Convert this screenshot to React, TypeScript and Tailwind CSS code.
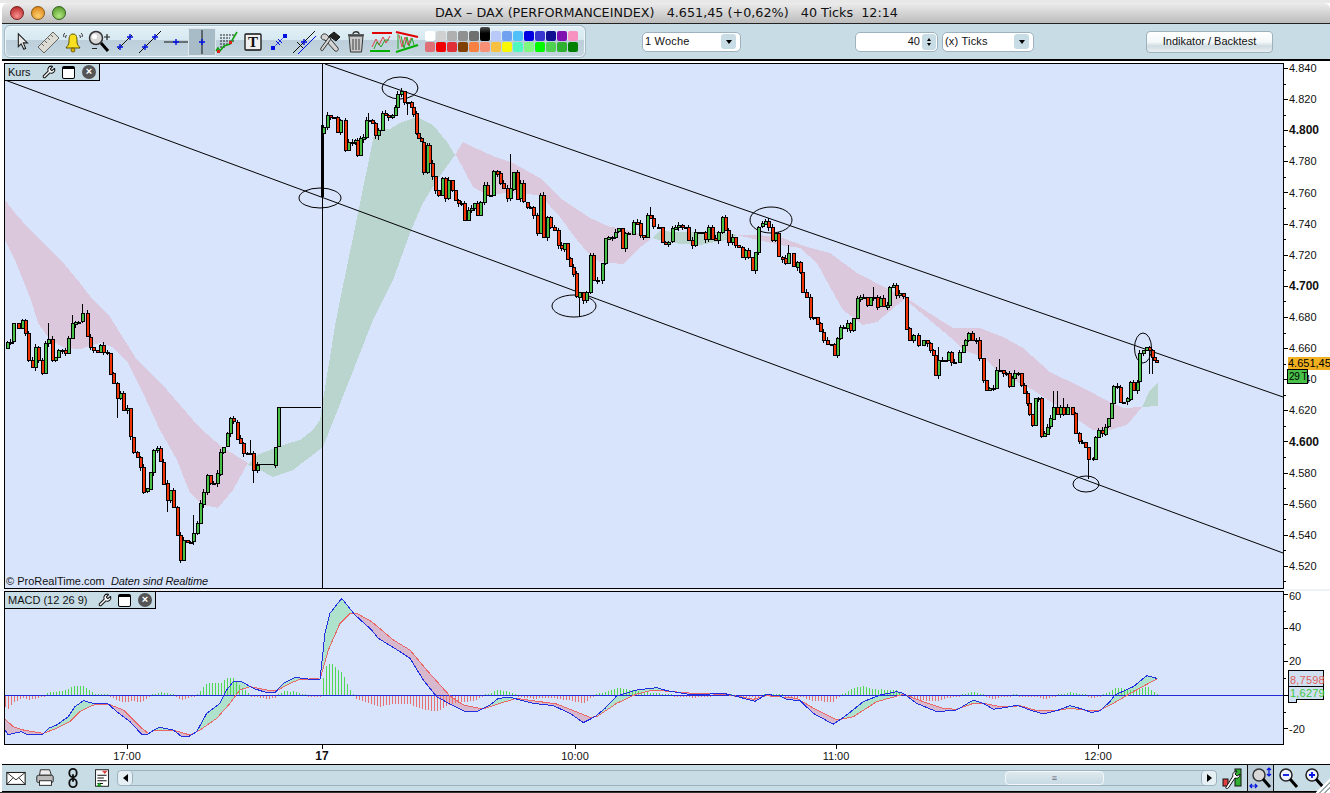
import React from 'react';
import { Wrench } from 'lucide-react';

type Pt = [number, number];

// chart points were read off crops of the screenshot, so they carry the crop origin
const crop = (ox: number, oy: number, flat: number[]): Pt[] => {
  const out: Pt[] = [];
  for (let i = 0; i < flat.length; i += 2) out.push([ox + flat[i] / 3, oy + flat[i + 1] / 3]);
  return out;
};

const interp = (pts: Pt[], x: number) => {
  if (x <= pts[0][0]) return pts[0][1];
  for (let i = 1; i < pts.length; i++) {
    if (x <= pts[i][0]) {
      const [x0, y0] = pts[i - 1];
      const [x1, y1] = pts[i];
      return y0 + ((y1 - y0) * (x - x0)) / (x1 - x0 || 1);
    }
  }
  return pts[pts.length - 1][1];
};

const closes: Pt[] = [
  ...crop(0, 300, [20,125,30,125,40,70,55,85,65,60,75,100,85,180,95,200,105,140,115,180,125,220,135,130,145,118,155,180,165,170,175,150,185,150,195,160,205,115,215,70,225,65,235,65,245,40,260,110,270,140,280,150,290,155,300,135,310,155,320,158,330,220,340,250,350,295,360,280,370,330,380,325,390,410,400,455,410,470,420,500,430,575,440,565,450,515,460,450,470,445,480,485,490,550,500,600,510,570,520,620,530,705,540,780,550,720,560,725,570,725,580,700,590,670,600,610,610,575,620,525,630,550,640,550,650,520,660,455,670,440,680,400,690,355,700,365,710,415,720,430,730,460,740,460,750,460,760,510,770,495,825,440,835,322]),
];

const closesRight: Pt[] = [
  ...crop(300, 70, [70,170,80,135,90,140,100,140,110,185,120,150,135,240,145,215,155,215,165,210,170,255,180,205,190,200,197,150,205,150,215,160,225,195,235,180,245,130,255,135,265,140,275,135,285,112,292,72,302,62,312,95,322,95,332,110,340,130,347,190,355,205,362,215,370,305,380,225,388,278,397,318,405,360,415,375,425,325,435,385,445,330,455,360,465,390,473,400,483,400,493,450,503,420,513,415,523,400,530,435,540,395,552,345,560,375,570,375,580,302,590,310,600,340,610,355,620,385,630,355,640,305,650,385,660,340,670,395,680,410,690,410,700,435,710,490,720,375,730,500,740,440,750,470,763,480,773,525,783,535,793,518,800,565,810,590,818,610,828,680,838,665,848,690,858,665]),
  ...crop(590, 190, [0,195,10,270,20,270,35,220,45,145,55,140,65,140,75,125,85,115,95,175,105,130,115,130,130,95,140,100,150,135,160,140,170,75,180,85,190,110,205,110,215,155,225,160,235,155,245,115,255,110,265,105,275,110,285,110,295,150,305,165,315,125,325,125,335,125,345,145,355,110,365,145,375,150,385,125,395,80,405,120,415,155,425,140,435,165,445,170,455,200,465,180,475,200,485,240,495,185,505,110,515,100,525,92,535,110,545,150,555,130,565,200,575,205,585,220,595,190,610,230,620,215,630,245,637,305,647,320,660,380,670,380,680,400,690,425,700,450,710,462,722,462,732,495,742,445,750,412,760,415,770,400,780,420,790,385,800,325,810,320,820,320,830,345,840,320,850,320,860,350,870,325,880,350,890,345,898,290,908,285,918,315,928,310,938,320,948,415,958,450,968,435,985,465]),
  ...crop(920, 270, [10,210,20,220,30,240,38,255,46,315,55,270,65,270,75,270,85,245,93,275,103,275,118,245,128,225,135,210,145,188,155,210,168,210,178,265,188,330,198,360,208,355,218,355,228,300,238,300,248,310,258,310,268,350,275,325,283,310,293,310,303,345,311,370,320,400,328,432,336,465,345,385,355,385,363,500,373,490,381,470,390,445,400,410,410,430,420,410,430,430,440,410,457,430,466,490,476,515,486,515,494,530,504,565,518,565,526,500,535,480,545,490,555,470,563,445,573,400,580,348,590,350,600,395,610,395,620,385,630,335,640,360,650,335,658,250]),
  ...crop(1050, 320, [278,90,288,80,296,90,305,110,312,120,318,125]),
];

const longWicks: Pt[] = [
  [511,154],[579,317],[1089,479],[1150,374],[48,323],[999,359],[1055,391],[1063,398],[938,347],[650,207],[872,287],[790,245],[83,304],[72,315],[118,418],[250,440],[252,483],[192,515],[167,512],[368,113],[407,115],[378,140],
];

const hash = (i: number) => ((i * 2654435761) >>> 0) % 97;

type Candle = { x: number; open: number; close: number; hi: number; lo: number };

const makeCandles = (pts: Pt[]): Candle[] =>
  pts.map(([x, close], i) => {
    const open = i === 0 ? close + 6 : pts[i - 1][1];
    const h = hash(i + 3);
    const top = Math.min(open, close);
    const bot = Math.max(open, close);
    let hi = top - (h % 4);
    let lo = bot + ((h >> 2) % 5);
    for (const [wx, wy] of longWicks) {
      if (Math.abs(wx - x) < 1.7) {
        if (wy < hi) hi = wy;
        if (wy > lo) lo = wy;
      }
    }
    return { x: Math.round(x), open, close, hi, lo };
  });

const candles = [...makeCandles(closes), ...makeCandles(closesRight)];

const clouds: { color: string; pts: Pt[] }[] = [
  { color: '#dcc8dc', pts: [[5,200],[15,213],[30,230],[50,250],[65,265],[80,283],[93,300],[110,317],[137,360],[167,390],[200,428],[222,447],[248,463],[233,490],[218,508],[203,505],[190,493],[177,460],[160,430],[143,393],[128,363],[113,347],[100,343],[80,349],[65,348],[50,340],[38,323],[31,300],[25,285],[15,260],[5,240]] },
  { color: '#b9d5cd', pts: [[248,465],[257,455],[283,445],[300,440],[313,430],[320,420],[323,400],[336,320],[358,213],[373,140],[375,129],[390,129],[400,123],[417,117],[433,125],[447,142],[455,155],[437,180],[422,205],[410,233],[393,280],[373,320],[323,447],[293,470],[273,477],[260,470]] },
  { color: '#dcc8dc', pts: [[455,155],[463,142],[473,147],[493,156],[513,163],[540,178],[563,200],[590,218],[610,227],[620,228],[637,233],[652,238],[637,250],[623,264],[600,262],[590,255],[577,240],[560,217],[540,195],[507,193],[487,195],[473,187],[457,157]] },
  { color: '#b9d5cd', pts: [[652,238],[660,231],[677,232],[690,232],[723,232],[737,235],[727,240],[700,245],[670,243]] },
  { color: '#dcc8dc', pts: [[737,235],[757,235],[780,237],[807,247],[830,253],[857,273],[890,290],[905,297],[920,307],[940,320],[953,328],[980,328],[1003,337],[1023,348],[1050,372],[1083,388],[1110,402],[1123,408],[1142,407],[1127,425],[1110,430],[1093,430],[1063,410],[1033,390],[1000,373],[983,357],[963,350],[950,337],[920,312],[905,299],[897,305],[877,322],[863,325],[843,310],[830,287],[817,263],[800,248],[780,245]] },
  { color: '#b9d5cd', pts: [[1142,407],[1150,390],[1158,383],[1158,406]] },
];

const rings = [
  { cx: 400, cy: 88, rx: 18, ry: 11 },
  { cx: 320, cy: 198, rx: 21, ry: 10 },
  { cx: 574, cy: 306, rx: 22, ry: 11 },
  { cx: 771, cy: 220, rx: 21, ry: 13 },
  { cx: 1143, cy: 348, rx: 8.5, ry: 15 },
  { cx: 1086, cy: 484, rx: 13, ry: 8 },
];

const path = (pts: Pt[]) => pts.map(([x, y]) => `${x},${y}`).join(' ');

function PriceDrawing() {
  return (
    <svg className="block w-full h-full" viewBox="5 64 1278 524" shapeRendering="crispEdges">
      {clouds.map((c, i) => (
        <polygon key={i} points={path(c.pts)} fill={c.color} />
      ))}
      <line x1="5" y1="80" x2="1283" y2="553" stroke="#000" strokeWidth="1" shapeRendering="auto" />
      <line x1="325" y1="64" x2="1283" y2="397" stroke="#000" strokeWidth="1" shapeRendering="auto" />
      {rings.map((r, i) => (
        <ellipse key={i} {...r} fill="none" stroke="#000" strokeWidth="1" shapeRendering="auto" />
      ))}
      <rect x="322" y="64" width="1" height="524" fill="#000" />
      <rect x="321" y="125" width="3" height="72" fill="#000" />
      <rect x="254" y="464" width="22" height="1" fill="#000" />
      <rect x="278" y="407" width="43" height="1" fill="#000" />
      {/* blacks first so a neighbour's edge doesn't eat the body colour */}
      {candles.map((c, i) => {
        const top = Math.round(Math.min(c.open, c.close));
        const h = Math.max(1, Math.round(Math.abs(c.open - c.close)));
        return (
          <g key={i}>
            <rect x={c.x} y={Math.round(c.hi)} width="1" height={Math.round(c.lo - c.hi)} fill="#000" />
            <rect x={c.x - 1} y={top} width="4" height={h + 1} fill="#000" />
          </g>
        );
      })}
      {candles.map((c, i) => {
        const top = Math.round(Math.min(c.open, c.close));
        const h = Math.round(Math.abs(c.open - c.close));
        if (h < 2) return null;
        return <rect key={i} x={c.x} y={top + 1} width="2" height={h - 1} fill={c.close < c.open ? '#48c048' : '#f03408'} />;
      })}
    </svg>
  );
}

const blue: Pt[] = [
  ...crop(0, 570, [15,480,25,495,40,490,65,485,85,495,130,492,145,475,170,465,205,440,225,410,250,392,280,400,325,402,350,425,390,455,425,493,440,495,465,478,480,472,520,480,545,500,565,500,590,485,620,430,660,400,680,360,700,335,725,335,760,355,800,368,825,368,850,340,885,322,930,328,955,328]),
  ...crop(300, 590, [60,268,75,130,90,70,125,25,165,75,215,120,235,145,300,185,330,205,370,270,410,320,450,342,495,365,530,365,570,345,595,325,630,322,700,340,760,347,810,370,850,398,885,380,915,355,950,318,1010,300,1070,293,1100,302,1180,315]),
  ...crop(690, 660, [30,104,90,100,110,102,150,112,195,124,230,103,270,108,290,118,330,122,370,160,430,193,470,165,520,125,570,105,620,95,640,100,680,130,740,155,800,150,850,120,880,130,910,148,960,140]),
  ...crop(1000, 640, [50,195,90,210,130,222,170,212,210,197,250,208,275,218,300,212,330,185,345,165,400,140,440,107,470,115]),
];

const red: Pt[] = [
  ...crop(0, 570, [15,448,40,470,70,480,130,490,170,475,210,455,240,425,280,405,325,402,370,420,420,470,445,490,465,480,525,482,570,495,600,480,650,445,690,400,720,360,750,350,800,360,830,362,870,340,900,328,955,326]),
  ...crop(300, 590, [60,268,85,180,120,100,150,70,170,70,215,95,280,150,330,180,380,240,450,318,490,345,550,357,600,340,650,325,720,335,770,342,840,370,870,382,890,380,950,340,1010,312,1060,300,1120,305,1180,310]),
  ...crop(690, 660, [30,100,110,104,150,110,190,118,230,107,320,115,380,150,440,180,490,170,560,125,640,103,700,125,760,145,800,148,850,130,880,130,930,140,960,140]),
  ...crop(1000, 640, [60,197,110,212,170,212,210,205,270,212,300,210,340,190,400,155,470,117]),
];

const xs = Array.from({ length: 1153 }, (_, i) => i + 5);
const histXs = xs.filter((x) => (x - 5) % 3 === 0);

function MacdDrawing() {
  return (
    <svg className="block w-full h-full" viewBox="5 592 1278 152" shapeRendering="crispEdges">
      {xs.map((x) => {
        const b = interp(blue, x);
        const r = interp(red, x);
        const top = Math.min(b, r);
        return <rect key={x} x={x} y={top} width="1" height={Math.abs(b - r)} fill={b < r ? '#aee2cc' : '#d8b8cc'} />;
      })}
      {histXs.map((x) => {
        const d = interp(red, x) - interp(blue, x);
        const h = Math.max(1, Math.abs(d));
        return d > 0
          ? <rect key={x} x={x} y={695 - h} width="1" height={h} fill="#50d850" />
          : <rect key={x} x={x} y={696} width="1" height={h} fill="#e87070" />;
      })}
      <rect x="5" y="695" width="1278" height="1" fill="#2028d8" />
      <polyline points={path(xs.map((x) => [x, interp(red, x)] as Pt))} fill="none" stroke="#e86868" strokeWidth="1" />
      <polyline points={path(xs.map((x) => [x, interp(blue, x)] as Pt))} fill="none" stroke="#2030e0" strokeWidth="1" />
    </svg>
  );
}

function Ico({ children, size = 24 }: { children: React.ReactNode; size?: number }) {
  return (
    <svg width={size} height={size} viewBox="0 0 24 24" className="block">
      {children}
    </svg>
  );
}

const blueCross = (x: number, y: number) => (
  <path d={`M${x - 3} ${y}H${x + 3}M${x} ${y - 3}V${y + 3}`} stroke="#0010e0" strokeWidth="1.4" fill="none" />
);

const toolIcons: React.ReactNode[] = [
  <Ico key="arrow" size={22}><path d="M8 3V17L11 14L14 20L16 19L13.5 13H18Z" fill="#e8e8e8" stroke="#222" strokeWidth="1.2" /></Ico>,
  <Ico key="ruler">
    <path d="M2 17L17 2L23 8L8 23Z" fill="#dcdcd4" stroke="#666" strokeWidth="1" />
    <path d="M6 14L8 16M9 11L11 13M12 8L14 10M15 5L17 7" stroke="#666" strokeWidth="1" />
  </Ico>,
  <Ico key="bell">
    <path d="M12 4C8 4 8 8 8 12C8 15 6 16 5 18H19C18 16 16 15 16 12C16 8 16 4 12 4Z" fill="#f8e020" stroke="#5a5000" strokeWidth="1" />
    <circle cx="12" cy="20" r="2" fill="#e0b000" stroke="#5a5000" strokeWidth=".8" />
    <path d="M3 7C2 5 3 4 4 3M21 7C22 5 21 4 20 3M5 8C4 7 5 6 5.5 5M19 8C20 7 19 6 18.5 5" stroke="#222" strokeWidth="1" fill="none" />
  </Ico>,
  <Ico key="zoom">
    <circle cx="9" cy="8" r="6.5" fill="#d8d8d8" stroke="#333" strokeWidth="1.5" />
    <circle cx="7.5" cy="6.5" r="2.5" fill="#fff" />
    <path d="M14 13L21 21" stroke="#000" strokeWidth="3" />
    <path d="M17 7H23M20 4V10M5 18.5H10" stroke="#222" strokeWidth="1.2" />
  </Ico>,
  <Ico key="seg"><path d="M5 19L19 5" stroke="#111" strokeWidth="1" />{blueCross(7, 17)}{blueCross(17, 7)}</Ico>,
  <Ico key="ray"><path d="M1 23L23 1" stroke="#111" strokeWidth="1" />{blueCross(7, 17)}{blueCross(17, 7)}</Ico>,
  <Ico key="hline"><path d="M0 12H24" stroke="#111" strokeWidth="1" />{blueCross(12, 12)}</Ico>,
  <Ico key="vline"><path d="M12 0V24" stroke="#111" strokeWidth="1" />{blueCross(12, 12)}</Ico>,
  <Ico key="fib">
    <path d="M5 5H19M5 8H15M5 11H19M5 14H14M5 17H11" stroke="#222" strokeWidth="1" strokeDasharray="2 1" />
    <path d="M1 21L3 18L5 21L9 16L15 14L19 7L22 2" stroke="#10a010" strokeWidth="1.6" fill="none" />
    <rect x="2" y="20" width="3" height="3" fill="#e02020" />
    <rect x="14" y="11" width="3" height="3" fill="#e02020" />
  </Ico>,
  <Ico key="text">
    <rect x="4" y="4" width="16" height="16" rx="1" fill="#f0f0f0" stroke="#111" strokeWidth="1.3" />
    <text x="12" y="17" textAnchor="middle" fontFamily="'Liberation Serif',serif" fontWeight="700" fontSize="15" fill="#111">T</text>
  </Ico>,
  <Ico key="diag">
    <path d="M7 17L17 7" stroke="#0010e0" strokeWidth="1" strokeDasharray="2 1" />
    <rect x="4" y="16" width="4" height="4" fill="#0010e0" />
    <rect x="16" y="4" width="4" height="4" fill="#0010e0" />
    <path d="M11 9L15 13M9 11L13 15" stroke="#0010e0" strokeWidth="1" />
  </Ico>,
  <Ico key="cross">
    <path d="M1 23L23 1" stroke="#111" strokeWidth="1" />
    <path d="M5 12L12 19" stroke="#111" strokeWidth="1" />
    <path d="M4 22L22 4" stroke="#0010e0" strokeWidth="1" transform="translate(2 2)" />
    {blueCross(12, 12)}
  </Ico>,
  <Ico key="tools">
    <path d="M3 7C4 3 8 3 10 6L20 18C21 20 19 22 17 21L7 10C5 10 3 9 3 7Z" fill="#d4d4d4" stroke="#333" strokeWidth="1" />
    <path d="M13 9L5 20C4 22 2 20 3 18L11 7Z" fill="#d4d4d4" stroke="#333" strokeWidth="1" />
    <path d="M11 6L16 2L22 7L18 11Z" fill="#222" stroke="#111" strokeWidth="1" />
  </Ico>,
  <Ico key="trash">
    <path d="M5 6H19L17.5 22H6.5Z" fill="#c8c8c8" stroke="#333" strokeWidth="1" />
    <path d="M9 9V20M12 9V20M15 9V20" stroke="#555" strokeWidth="1.2" />
    <path d="M4 5H20M9 4C9 1 15 1 15 4" stroke="#333" strokeWidth="1.3" fill="none" />
  </Ico>,
  <Ico key="channel">
    <path d="M3 3H23" stroke="#e00000" strokeWidth="2" />
    <path d="M1 21H21" stroke="#00b000" strokeWidth="2" />
    <path d="M3 17L7 9L10 15L14 7L17 13L21 6" stroke="#e03030" strokeWidth=".9" fill="none" />
    <path d="M5 19L8 12L12 17L16 10L20 10" stroke="#10a010" strokeWidth=".9" fill="none" />
  </Ico>,
  <Ico key="wedge">
    <path d="M1 2L23 7" stroke="#e00000" strokeWidth="2" />
    <path d="M1 22L23 15" stroke="#00b000" strokeWidth="2" />
    <path d="M3 4V19M6 6L9 18L12 7L14 16L17 8L19 15" stroke="#10a010" strokeWidth=".9" fill="none" />
    <path d="M4 5L7 17L10 7L13 15L16 8" stroke="#e03030" strokeWidth=".8" fill="none" />
  </Ico>,
];

const swatchesTop = ['bg-[#ffffff]','bg-[#d0d0d0]','bg-[#b0b0b0]','bg-[#909090]','bg-[#707070]','h-[14px] -mt-[4px] bg-[linear-gradient(to_bottom,#505050,#000000_45%)]','bg-[#b8c8f8]','bg-[#70a0f0]','bg-[#50c0f8]','bg-[#0000e0]','bg-[#3838d0]','bg-[#101090]','bg-[#8010b0]','bg-[#f890c0]'];
const swatchesBottom = ['bg-[#e07078]','bg-[#f00000]','bg-[#e03038]','bg-[#804000]','bg-[#f88040]','bg-[#f89078]','bg-[#f8c040]','bg-[#f8f800]','bg-[#50f8c0]','bg-[#80f880]','bg-[#00f800]','bg-[#50d050]','bg-[#30b030]','bg-[#008000]'];

const priceLabels = [4840, 4820, 4800, 4780, 4760, 4740, 4720, 4700, 4680, 4660, 4640, 4620, 4600, 4580, 4560, 4540, 4520];
const macdLabels = [{ v: '60', y: 596 }, { v: '40', y: 627 }, { v: '20', y: 661 }, { v: '-20', y: 728.5 }];
const timeLabels = [
  { t: '17:00', x: 127 },
  { t: '17', x: 322, bold: true },
  { t: '10:00', x: 575 },
  { t: '11:00', x: 836 },
  { t: '12:00', x: 1098 },
];

function Dropdown({ label, className }: { label: string; className: string }) {
  return (
    <div className={`h-[20px] flex items-center justify-between bg-white border border-[#9db2be] rounded-[5px] pl-[2px] pr-[4px] text-[11px] tracking-[0.2px] text-[#111] ${className}`}>
      <span>{label}</span>
      <span className="w-[15px] h-[15px] rounded-[3px] bg-[#c8dce6] flex items-center justify-center">
        <span className="w-0 h-0 border-x-[3px] border-x-transparent border-t-[4px] border-t-black" />
      </span>
    </div>
  );
}

function LegendBox({ label, className }: { label: string; className: string }) {
  return (
    <div className={`absolute left-0 top-0 h-[17px] flex items-center bg-[#c8dce6] border-r border-b border-black pl-[3px] text-[11px] text-[#111] ${className}`}>
      <span className="flex-1 whitespace-pre">{label}</span>
      <Wrench size={14} fill="#fff" stroke="#111" strokeWidth={1.8} className="mr-[6px]" />
      <span className="w-[13px] h-[13px] mr-[7px] bg-white border border-black rounded-[2px] border-t-[3px]" />
      <span className="w-[14px] h-[14px] mr-[3px] rounded-full bg-[#555] text-white text-[11px] leading-[13px] text-center font-bold">×</span>
    </div>
  );
}

export default function App() {
  return (
    <div className="relative w-[1330px] h-[793px] overflow-hidden bg-white [font-family:'Liberation_Sans',Arial,sans-serif]">
      <div className="h-[3px] bg-[#e8e8e8]" />

      {/* title bar */}
      <div className="ml-[2px] h-[21px] flex items-center rounded-t-[6px] bg-[linear-gradient(to_bottom,#ececec,#bcbcbc)] border-b border-[#222]">
        <div className="flex gap-[7px] ml-[8px]">
          <span className="w-[14px] h-[14px] rounded-full border border-[#7a2020] bg-[radial-gradient(circle_at_50%_75%,#f89090,#b01818)]" />
          <span className="w-[14px] h-[14px] rounded-full border border-[#8a5a10] bg-[radial-gradient(circle_at_50%_75%,#fcd070,#d87808)]" />
          <span className="w-[14px] h-[14px] rounded-full border border-[#306020] bg-[radial-gradient(circle_at_50%_75%,#b0e880,#4c9020)]" />
        </div>
        <div className="ml-[369px] whitespace-pre text-[12.75px] text-[#111] [font-family:'DejaVu_Sans',sans-serif]">
          {'DAX – DAX (PERFORMANCEINDEX)   4.651,45 (+0,62%)   40 Ticks  12:14'}
        </div>
      </div>

      {/* toolbar */}
      <div className="ml-[2px] h-[37px] flex items-center bg-[#c8dce6] border-b-2 border-black pl-[3px]">
        <div className="w-[580px] h-[31px] flex items-center rounded-[5px] border border-[#eef6fa] outline outline-1 outline-[#a4bac6] pl-[3px] bg-[linear-gradient(to_bottom,#e2f0f6_0%,#d6e8f0_45%,#bccfda_46%,#c4d6e0_100%)]">
          {toolIcons.map((icon, i) => (
            <div key={i} className={`w-[25.7px] h-[26px] flex items-center justify-center ${i === 7 ? 'bg-[#a8bcc8] outline outline-1 outline-[#dce8ee]' : ''}`}>
              {icon}
            </div>
          ))}
          <div className="ml-[5px] flex flex-col gap-px">
            <div className="flex gap-px items-end">
              {swatchesTop.map((c) => (
                <span key={c} className={`w-[10px] rounded-[2px] ${c.startsWith('h-') ? c : `h-[10px] ${c}`}`} />
              ))}
            </div>
            <div className="flex gap-px">
              {swatchesBottom.map((c) => (
                <span key={c} className={`w-[10px] h-[10px] rounded-[2px] ${c}`} />
              ))}
            </div>
          </div>
        </div>
        <Dropdown label="1 Woche" className="ml-[57px] w-[99px]" />
        <div className="ml-[114px] w-[83px] h-[20px] flex items-center justify-end bg-white border border-[#9db2be] rounded-[5px] text-[11px] text-[#111] pr-[1px]">
          <span>40</span>
          <span className="ml-[2px] w-[14px] h-[16px] rounded-[3px] bg-[#c8dce6] flex flex-col items-center justify-center gap-[2px]">
            <span className="w-0 h-0 border-x-[2px] border-x-transparent border-b-[3px] border-b-black" />
            <span className="w-0 h-0 border-x-[2px] border-x-transparent border-t-[3px] border-t-black" />
          </span>
        </div>
        <Dropdown label="(x) Ticks" className="ml-[4px] w-[92px]" />
        <div className="ml-[112px] w-[127px] h-[22px] flex items-center justify-center rounded-[4px] border border-[#9db2be] bg-[linear-gradient(to_bottom,#ffffff_0%,#f4f8fa_50%,#d0dce2_70%,#e8eef2_100%)] text-[11px] text-[#111]">
          Indikator / Backtest
        </div>
      </div>

      <div className="h-[2px]" />

      {/* price panel */}
      <div className="ml-[4px] flex h-[526px]">
        <div className="relative w-[1280px] border border-black bg-[#d8e4fc]">
          <PriceDrawing />
          <LegendBox label="Kurs" className="w-[95px]" />
          <div className="absolute left-[1px] -bottom-[1px] whitespace-pre text-[11px] text-[#111]">
            {'© ProRealTime.com  '}
            <span className="italic tracking-[-0.1px]">Daten sind Realtime</span>
          </div>
        </div>
        <div className="relative flex-1">
          {Array.from({ length: 34 }, (_, i) => (
            <span key={i} className={`absolute left-0 h-px bg-black ${i % 2 === 0 ? 'w-[4px]' : 'w-[2px]'}`} style={{ top: 5 + i * 15.56 }} />
          ))}
          {priceLabels.map((p, i) => {
            const s = `${String(p).slice(0, 1)}.${String(p).slice(1)}`;
            return (
              <span key={p} className={`absolute left-[5px] leading-[14px] text-[#111] ${p % 100 === 0 ? 'text-[12px] font-bold' : 'text-[11px]'}`} style={{ top: 68 - 63 + i * 31.13 - 7 }}>
                {s}
              </span>
            );
          })}
          <div className="absolute left-[4px] top-[294px] w-[43px] h-[13px] bg-[#f0b020] text-[11px] leading-[13px] text-black overflow-hidden whitespace-nowrap">4.651,45</div>
          <div className="absolute left-[4px] top-[307px] w-[19px] h-[13px] pl-[1px] bg-[#48c048] outline outline-1 outline-black text-[10px] leading-[13px] tracking-[-0.4px] text-black overflow-hidden whitespace-nowrap">29 T</div>
        </div>
      </div>

      <div className="h-[2px] bg-[#eef2f8]" />

      {/* macd panel */}
      <div className="ml-[4px] flex h-[154px]">
        <div className="relative w-[1280px] border border-black bg-[#d8e4fc]">
          <MacdDrawing />
          <LegendBox label="MACD (12 26 9)" className="w-[151px]" />
        </div>
        <div className="relative flex-1">
          {Array.from({ length: 9 }, (_, i) => (
            <span key={i} className={`absolute left-0 h-px bg-black ${i % 2 === 0 ? 'w-[4px]' : 'w-[2px]'}`} style={{ top: 3 + i * 16.8 }} />
          ))}
          {macdLabels.map((l) => (
            <span key={l.v} className="absolute left-[5px] leading-[14px] text-[11px] text-[#111]" style={{ top: l.y - 591 - 7 }}>{l.v}</span>
          ))}
          <div className="absolute left-[4px] top-[79px] w-[36px] h-[30px] bg-[#d0e0f0] border border-black pt-[3px] text-[11px] leading-[12px]">
            <div className="text-[#e06060] border-b border-black tracking-[0.2px] pl-px">8,7598</div>
            <div className="text-[#40c840] tracking-[0.2px] pl-px">1,6279</div>
          </div>
          <div className="absolute left-[4px] top-[108px] w-[9px] h-[4px] bg-[#d0e0f0] border border-black border-t-0" />
        </div>
      </div>

      {/* time axis */}
      <div className="relative h-[19px]">
        {timeLabels.map((l) => (
          <React.Fragment key={l.t}>
            <span className="absolute top-0 w-px h-[4px] bg-black" style={{ left: l.x }} />
            <span className={`absolute top-[4px] -translate-x-1/2 leading-[14px] text-[#111] ${l.bold ? 'text-[12px] font-bold' : 'text-[11px]'}`} style={{ left: l.x }}>{l.t}</span>
          </React.Fragment>
        ))}
      </div>

      {/* bottom bar */}
      <div className="ml-[2px] h-[28px] flex items-center bg-[#c8dce6] border-y border-black">
        <div className="w-[28.5px] flex justify-center">
          <Ico size={22}><rect x="2" y="6" width="20" height="13" fill="#fff" stroke="#222" strokeWidth="1.2" /><path d="M2 6L12 14L22 6M2 19L9 11.5M22 19L15 11.5" stroke="#222" strokeWidth="1" fill="none" /></Ico>
        </div>
        <div className="w-[28.5px] flex justify-center">
          <Ico size={22}><path d="M7 3H17L19 9H6Z" fill="#eee" stroke="#222" /><rect x="3" y="9" width="18" height="8" rx="2" fill="#bbb" stroke="#222" /><rect x="6" y="15" width="13" height="5" fill="#fff" stroke="#222" /></Ico>
        </div>
        <div className="w-[28.5px] flex justify-center">
          <Ico size={22}><rect x="8" y="2" width="8" height="9" rx="4" fill="none" stroke="#111" strokeWidth="2" /><rect x="8" y="13" width="8" height="9" rx="4" fill="none" stroke="#111" strokeWidth="2" /><path d="M12 8V16" stroke="#111" strokeWidth="2" /></Ico>
        </div>
        <div className="w-[28.5px] flex justify-center">
          <Ico size={22}><rect x="5" y="3" width="14" height="18" fill="#fff" stroke="#111" /><path d="M7 9H17M7 12H14M7 15H17M7 18H13" stroke="#111" strokeWidth="1.2" /><path d="M12 4H18L15 7.5Z" fill="#e04040" /><path d="M6 21L9 17L12 21Z" fill="#20a020" /></Ico>
        </div>
        <div className="ml-px w-[1100px] h-[16px] flex items-center rounded-[4px] border border-[#9db2be] bg-[#c8dce6]">
          <span className="w-[15px] h-[14px] flex items-center justify-center rounded-[4px] bg-[#e6f0f4] border-r border-[#9db2be]">
            <span className="w-0 h-0 border-y-[4px] border-y-transparent border-r-[5px] border-r-black" />
          </span>
          <div className="flex-1 flex">
            <div className="ml-[872px] w-[99px] h-[14px] flex items-center justify-center rounded-[4px] border border-[#f4f8fa] bg-[linear-gradient(to_bottom,#dde9ee,#c8dae4)] text-[9px] leading-none text-[#667]">≡</div>
          </div>
          <span className="w-[15px] h-[14px] flex items-center justify-center rounded-[4px] bg-[#e6f0f4] border-l border-[#9db2be]">
            <span className="w-0 h-0 border-y-[4px] border-y-transparent border-l-[5px] border-l-black" />
          </span>
        </div>
        <div className="ml-[3px] flex items-center">
          <Ico><rect x="3" y="13" width="5" height="7" fill="#e04040" stroke="#111" /><rect x="15" y="3" width="6" height="17" fill="#30b030" stroke="#111" /><path d="M6 21C5 23 8 23 9 21L15 12C18 13 20 11 20 8L17 10L15 8L17 5C14 5 12 8 13 10Z" fill="#fff" stroke="#111" /></Ico>
        </div>
        <div className="ml-[4px] w-[25px] h-[26px] flex items-center justify-center outline outline-1 outline-[#111] bg-[#bccdd8]">
          <Ico><circle cx="10" cy="9" r="6" fill="#d8d8d8" stroke="#333" strokeWidth="1.5" /><path d="M14 13L21 21" stroke="#000" strokeWidth="3" /><path d="M20 2V10M18 4L20 2L22 4M18 8L20 10L22 8M1 20H8M3 18L1 20L3 22M6 18L8 20L6 22" stroke="#0010e0" strokeWidth="1.2" fill="none" /></Ico>
        </div>
        <div className="ml-[3px] flex items-center gap-[2px]">
          <Ico><circle cx="10" cy="9" r="6" fill="#eef2ff" stroke="#222" strokeWidth="1.5" /><path d="M7 9H13" stroke="#0010e0" strokeWidth="1.8" /><path d="M14 13L21 21" stroke="#000" strokeWidth="3" /></Ico>
          <Ico><circle cx="10" cy="9" r="6" fill="#eef2ff" stroke="#222" strokeWidth="1.5" /><path d="M7 9H13M10 6V12" stroke="#0010e0" strokeWidth="1.8" /><path d="M14 13L21 21" stroke="#000" strokeWidth="3" /></Ico>
        </div>
      </div>
      <div className="h-[1px] bg-[#333]" />

      {/* resize grip */}
      <div className="absolute right-0 bottom-0 w-[14px] h-[15px] bg-[linear-gradient(135deg,transparent_48%,#ffffff_49%,#ffffff_60%,#9aa_61%,#9aa_66%,#ffffff_67%,#ffffff_78%,#9aa_79%,#9aa_84%,#ffffff_85%)]" />
    </div>
  );
}
